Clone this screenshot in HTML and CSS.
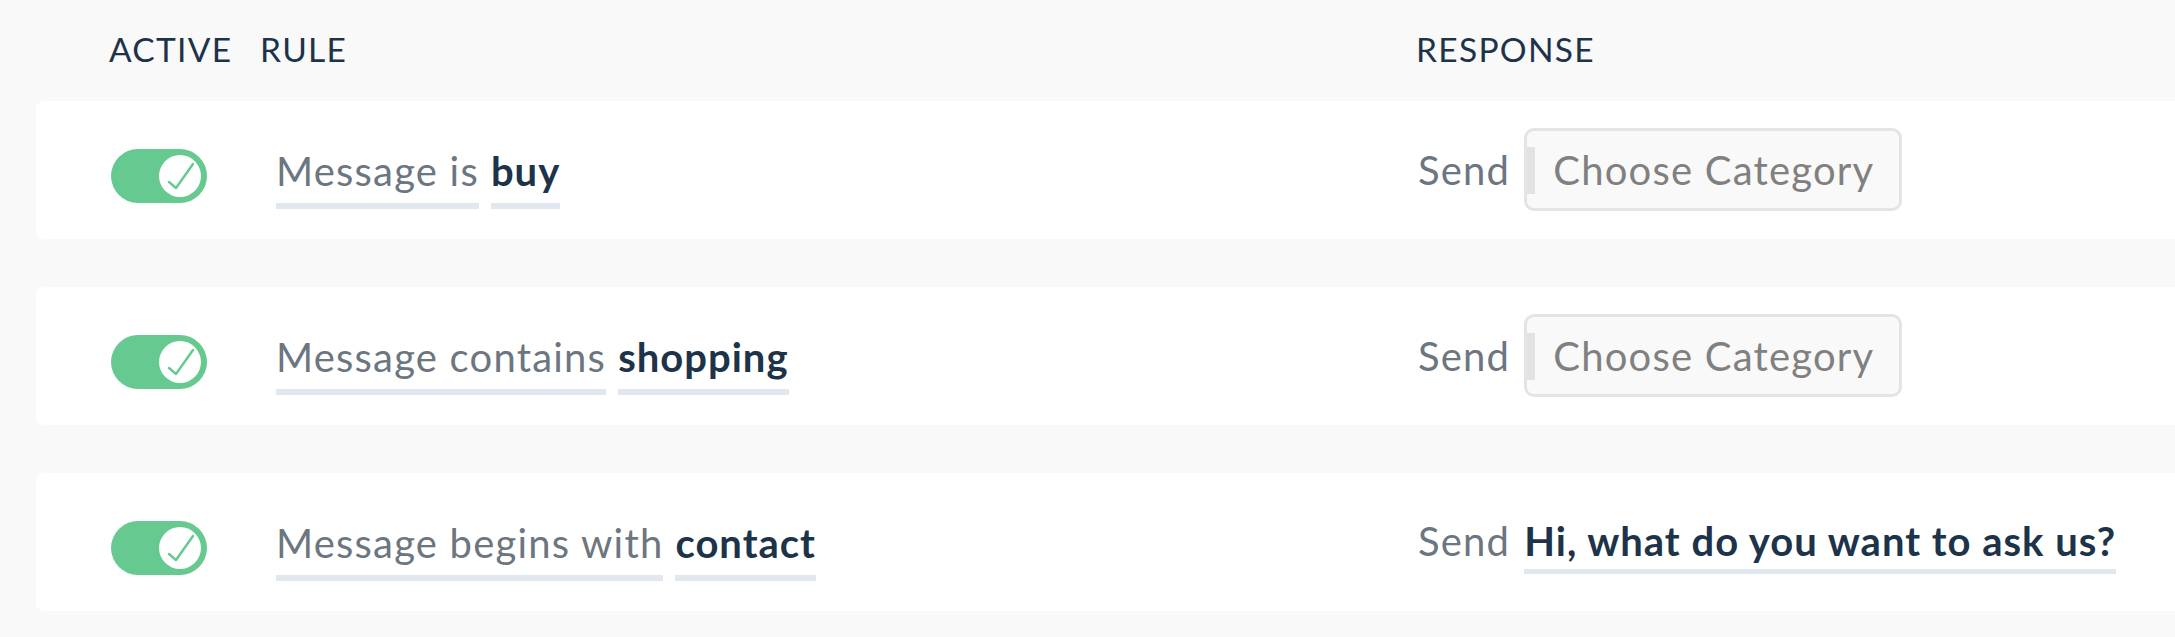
FILE: index.html
```html
<!DOCTYPE html>
<html lang="en">
<head>
<meta charset="utf-8">
<title>Rules</title>
<link rel="stylesheet" href="styles.css">
</head>
<body>
<div class="page">
  <div class="head">
    <div class="head-cell">ACTIVE</div>
    <div class="head-cell">RULE</div>
    <div class="head-cell">RESPONSE</div>
  </div>

  <div class="row">
    <div class="toggle"><span class="knob"><svg viewBox="0 0 42 42" width="42" height="42"><path d="M10 27 L17 33 L34 9" fill="none" stroke="#66c98f" stroke-width="2.4" stroke-linecap="round" stroke-linejoin="round"/></svg></span></div>
    <div class="rule"><span class="cond">Message is</span><span class="kw">buy</span></div>
    <div class="resp"><span class="send">Send</span><div class="select"><span class="select-bar"></span><span class="select-text">Choose Category</span></div></div>
  </div>

  <div class="row">
    <div class="toggle"><span class="knob"><svg viewBox="0 0 42 42" width="42" height="42"><path d="M10 27 L17 33 L34 9" fill="none" stroke="#66c98f" stroke-width="2.4" stroke-linecap="round" stroke-linejoin="round"/></svg></span></div>
    <div class="rule"><span class="cond">Message contains</span><span class="kw">shopping</span></div>
    <div class="resp"><span class="send">Send</span><div class="select"><span class="select-bar"></span><span class="select-text">Choose Category</span></div></div>
  </div>

  <div class="row">
    <div class="toggle"><span class="knob"><svg viewBox="0 0 42 42" width="42" height="42"><path d="M10 27 L17 33 L34 9" fill="none" stroke="#66c98f" stroke-width="2.4" stroke-linecap="round" stroke-linejoin="round"/></svg></span></div>
    <div class="rule"><span class="cond">Message begins with</span><span class="kw">contact</span></div>
    <div class="resp resp-text"><span class="send">Send</span><span class="reply">Hi, what do you want to ask us?</span></div>
  </div>
</div>
</body>
</html>
```

FILE: styles.css
```css
html, body {
  margin: 0;
  padding: 0;
  background: #f9f9f9;
  overflow: hidden;
}
body {
  font-family: Lato, "Open Sans", sans-serif;
  color: #1d3349;
}
.page {
  width: 2175px;
  height: 637px;
  overflow: hidden;
}
.head {
  display: grid;
  grid-template-columns: 151px 1156px 1fr;
  padding: 29px 0 0 109px;
  height: 72px;
  font-size: 33.5px;
  line-height: 40px;
  letter-spacing: 1.3px;
  color: #1d3349;
}
.row {
  display: grid;
  grid-template-columns: 165px 1142px 1fr;
  align-items: start;
  margin: 0 -40px 48px 36px;
  padding-left: 75px;
  height: 138px;
  background: #fff;
  border-radius: 8px;
  box-sizing: border-box;
  font-size: 40px;
  line-height: 48px;
  letter-spacing: 1.2px;
}
.toggle {
  margin-top: 48px;
  width: 96px;
  height: 54px;
  border-radius: 27px;
  background: #66c98f;
  display: flex;
  justify-content: flex-end;
  align-items: center;
  padding-right: 6px;
  box-sizing: border-box;
}
.knob {
  width: 42px;
  height: 42px;
  border-radius: 50%;
  background: #fff;
  display: block;
}
.knob svg {
  display: block;
}
.rule {
  margin-top: 46px;
  display: flex;
  gap: 12px;
}
.cond, .kw {
  display: inline-block;
  padding-bottom: 8px;
  border-bottom: 6px solid #e1e7ee;
}
.cond {
  color: #6c7680;
}
.kw {
  color: #1d3349;
  font-weight: 700;
  letter-spacing: 1px;
}
.resp {
  margin-top: 27px;
  height: 83px;
  display: flex;
  align-items: center;
  gap: 14px;
}
.send {
  color: #6c7680;
}
.select {
  width: 378px;
  height: 83px;
  box-sizing: border-box;
  border: 3px solid #e4e4e4;
  border-radius: 10px;
  background: #f9f9f9;
  display: flex;
  align-items: center;
}
.select-bar {
  width: 8px;
  height: 47px;
  background: #e2e2e2;
  margin-top: 2px;
}
.select-text {
  margin-left: 18px;
  color: #808080;
}
.resp-text {
  align-items: flex-start;
}
.resp-text .send {
  margin-top: 17px;
}
.reply {
  margin-top: 17px;
  color: #1d3349;
  font-weight: 700;
  letter-spacing: 1px;
  padding-bottom: 4px;
  border-bottom: 5px solid #e1e7ee;
}
```
